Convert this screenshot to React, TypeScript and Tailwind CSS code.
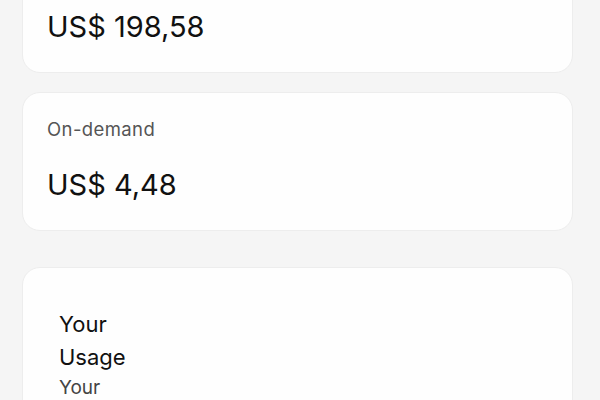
const cards = [
  { label: "Included", amount: "US$ 198,58" },
  { label: "On-demand", amount: "US$ 4,48" },
];

const App = () => {
  return (
    <div
      className="min-h-screen w-full overflow-hidden bg-[#f5f5f5] pl-[22px] pr-[27px]"
      style={{ fontFamily: "Inter, 'Noto Sans', sans-serif" }}
    >
      <div className="-mt-[66px] flex flex-col gap-[19px]">
        {cards.map((c) => (
          <div
            key={c.label}
            className="flex h-[139px] flex-col rounded-[18px] border border-[#ededed] bg-[#fefefe] px-[24px] pt-[23px]"
          >
            <div className="text-[18.5px] leading-[27px] tracking-[0.4px] text-[#555555]">
              {c.label}
            </div>
            <div className="mt-[23px] text-[29px] leading-[38px] text-[#111111]">
              {c.amount}
            </div>
          </div>
        ))}
      </div>

      <div className="mt-[36px] h-[200px] rounded-[18px] border border-[#ededed] bg-[#fefefe] px-[36px] pt-[40px]">
        <div className="w-[80px]">
          <div className="text-[22px] leading-[33px] text-[#111111]">
            Your Usage
          </div>
          <div className="text-[19px] leading-[27px] text-[#444444]">
            Your usage this cycle
          </div>
        </div>
      </div>
    </div>
  );
};

export default App;
